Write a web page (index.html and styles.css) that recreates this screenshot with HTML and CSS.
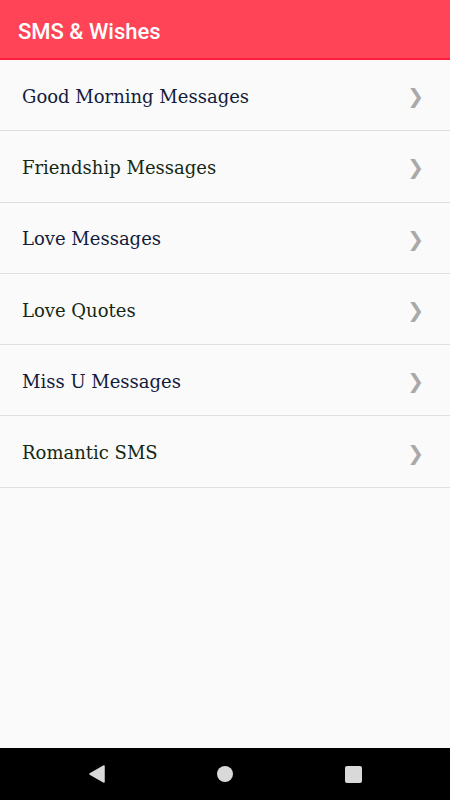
FILE: index.html
```html
<!DOCTYPE html>
<html lang="en">
<head>
    <meta charset="UTF-8">
    <meta name="viewport" content="width=device-width, initial-scale=1.0">
    <title>SMS &amp; Wishes</title>
    <link rel="stylesheet" href="styles.css">
</head>
<body>
    <div class="app">
        <div class="toolbar">SMS &amp; Wishes</div>
        <ul class="menu">
            <li class="item navy"><span>Good Morning Messages</span><span class="arrow">&#10095;</span></li>
            <li class="item green"><span>Friendship Messages</span><span class="arrow">&#10095;</span></li>
            <li class="item navy"><span>Love Messages</span><span class="arrow">&#10095;</span></li>
            <li class="item green"><span>Love Quotes</span><span class="arrow">&#10095;</span></li>
            <li class="item navy"><span>Miss U Messages</span><span class="arrow">&#10095;</span></li>
            <li class="item green"><span>Romantic SMS</span><span class="arrow">&#10095;</span></li>
        </ul>
        <div class="navbar">
            <svg width="16" height="18" viewBox="0 0 16 18"><path d="M15 1 L1 9 L15 17 Z" fill="#d9d9d9" stroke="#d9d9d9" stroke-linejoin="round" stroke-width="1.5"/></svg>
            <svg width="16" height="16" viewBox="0 0 16 16"><circle cx="8" cy="8" r="8" fill="#d9d9d9"/></svg>
            <svg width="17" height="17" viewBox="0 0 17 17"><rect x="0" y="0" width="17" height="17" rx="2" fill="#d9d9d9"/></svg>
        </div>
    </div>
</body>
</html>
```

FILE: styles.css
```css
body{
    margin: 0;
    background-color: #fafafa;
}
.app{
    display: flex;
    flex-direction: column;
    height: 800px;
}
.toolbar{
    box-sizing: border-box;
    height: 60px;
    padding-top: 4px;
    background-color: #ff4458;
    border-bottom: 2px solid #ff1f3c;
    color: white;
    font-family: Roboto, sans-serif;
    font-size: 22px;
    font-weight: 500;
    display: flex;
    align-items: center;
    padding-left: 18px;
}
.menu{
    list-style: none;
    margin: 0;
    padding: 0;
    flex: 1;
}
.item{
    box-sizing: border-box;
    height: 71.3px;
    padding-top: 2px;
    border-bottom: 1.5px solid #dedede;
    display: flex;
    align-items: center;
    justify-content: space-between;
    padding-left: 22px;
    padding-right: 26px;
    font-family: "DejaVu Serif", serif;
    font-size: 18px;
}
.navy{
    color: #141c3c;
}
.green{
    color: #142814;
}
.arrow{
    color: #a9a9a9;
    font-family: "DejaVu Sans", sans-serif;
    font-size: 20px;
}
.navbar{
    height: 52px;
    background-color: black;
    display: flex;
    align-items: center;
    justify-content: center;
    gap: 112px;
}
```
